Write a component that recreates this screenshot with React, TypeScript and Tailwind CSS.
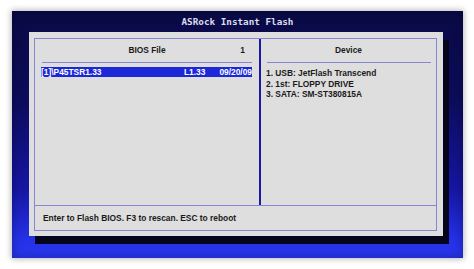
import React from "react";

export default function App() {
  const sans = { fontFamily: '"Liberation Sans", Arial, sans-serif' };
  return (
    <div className="w-[474px] h-[269px] bg-white pt-[11px] pl-[12px]" style={sans}>
      <div className="w-[451px] h-[247px] flex flex-col bg-[linear-gradient(180deg,#0a0a46_0%,#0c0c5a_35%,#1616a4_72%,#2431e6_92%,#2a38f2_100%)] shadow-[0_0_6px_1px_rgba(0,0,0,0.28),inset_0_0_12px_rgba(0,0,30,0.35)]">
        <div className="h-[21px] flex items-center justify-center text-[9.3px] font-bold text-[#dcdcec] font-['DejaVu_Sans_Mono',monospace] whitespace-pre">
          ASRock Instant Flash
        </div>
        <div className="ml-[17px] w-[414px] h-[204px] bg-[#dedede] pt-[6px] pl-[5px] pr-[6px] pb-[5px] shadow-[6px_8px_0_#04041a] flex">
          <div className="flex-1 border border-[#8686d2] flex flex-col text-[8.4px] font-bold text-[#1a1a1a]">
            <div className="h-[166px] flex">
              {/* Left column */}
              <div className="w-[224px] flex flex-col">
                <div className="h-[23px] grid grid-cols-[1fr_auto_1fr] items-center">
                  <div />
                  <div>BIOS File</div>
                  <div className="text-right pr-[14px]">1</div>
                </div>
                <div className="h-px bg-[#8686d2] ml-[7px] mr-[7px]" />
                <div className="mt-[4px] h-[10px] ml-[6px] mr-[7px] bg-[#1c28d8] text-white flex items-center leading-none">
                  <span className="flex-1">[1]\P45TSR1.33</span>
                  <span className="mr-[14px]">L1.33</span>
                  <span>09/20/09</span>
                </div>
              </div>
              {/* Divider */}
              <div className="w-[2px] bg-[#1a1aa6]" />
              {/* Right column */}
              <div className="flex-1 flex flex-col">
                <div className="h-[23px] flex items-center justify-center">Device</div>
                <div className="h-px bg-[#8686d2] ml-[6px] mr-[5px]" />
                <div className="mt-[5px] pl-[5px] leading-[10.5px] flex flex-col">
                  <span>1. USB: JetFlash Transcend</span>
                  <span>2. 1st: FLOPPY DRIVE</span>
                  <span>3. SATA: SM-ST380815A</span>
                </div>
              </div>
            </div>
            <div className="flex-1 border-t border-[#8686d2] flex items-center pl-[8px]">
              Enter to Flash BIOS. F3 to rescan. ESC to reboot
            </div>
          </div>
        </div>
      </div>
    </div>
  );
}
